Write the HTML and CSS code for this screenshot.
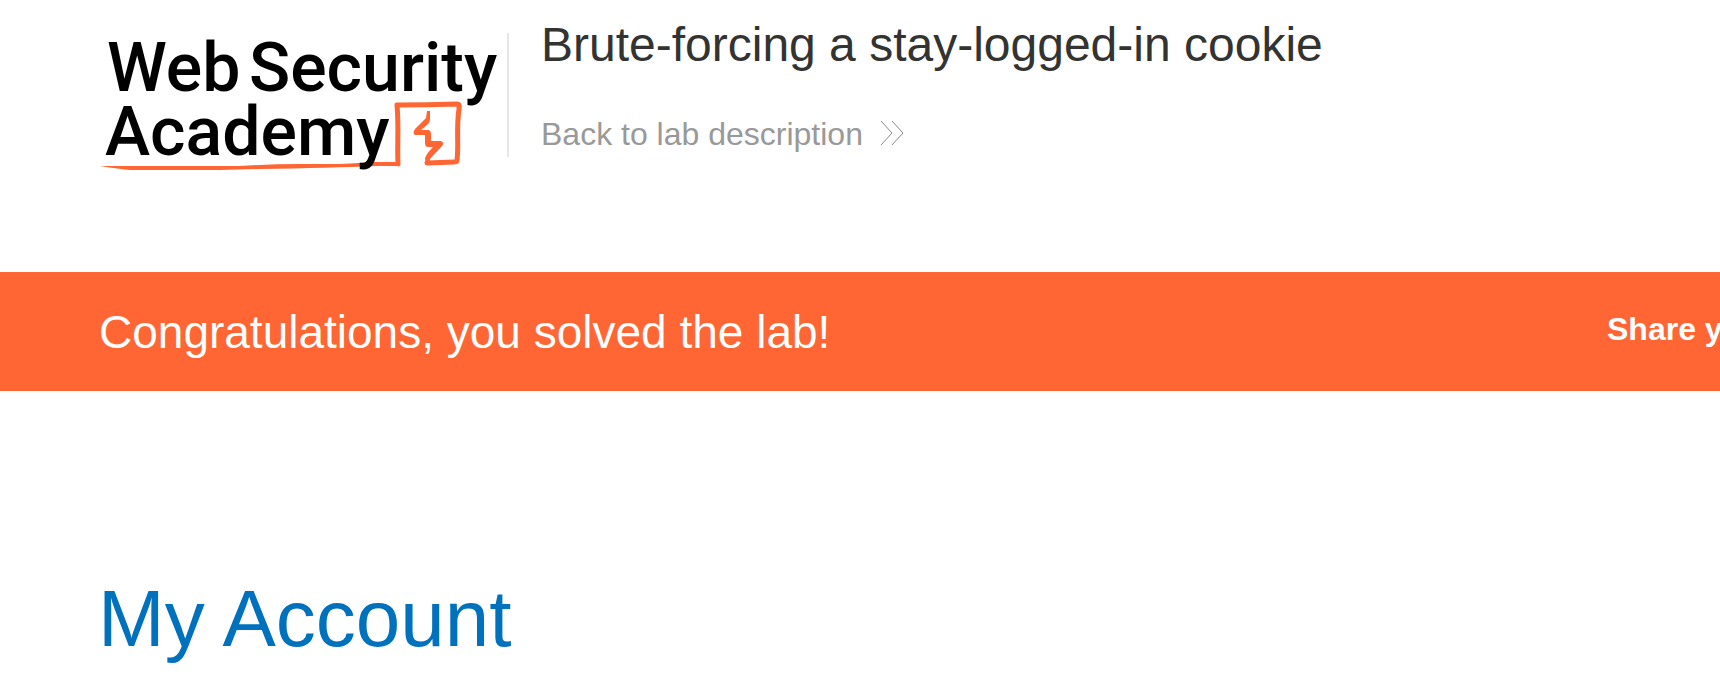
FILE: index.html
```html
<!DOCTYPE html>
<html lang="en">
<head>
<meta charset="utf-8">
<title>Brute-forcing a stay-logged-in cookie</title>
<link rel="stylesheet" href="styles.css">
</head>
<body>
<header class="lab-header">
  <svg class="logo" viewBox="0 0 400 150" role="img" aria-label="Web Security Academy">
    <path class="underline" d="M0 142 L12 142 Q30 142 90 142 L140 142 Q170 140 200 140 L240 140 Q260 139 276 138 L299 138 L299 142 L276 142 Q230 144 160 145 L120 146 L30 146 Q20 145 0 142 Z"/>
    <path class="frame-line" d="M298 140 C297 124 299 103 297 81 Q328 81 357 80 C360 80 359 82 359 85 C356 104 359 122 357 136 Q357 138 354 138 L327 139"/>
    <path class="spark" d="M327 87 L330 87 L330 95 Q330 98 328 100 L321 106 L329 106 Q331 107 331 110 L331 117 L341 117 Q345 119 342 122 L330 135 L330 141 L326 141 L325 134 Q327 129 333 123 L328 123 Q325 123 325 119 L325 111 L315 111 Q312 109 315 105 L326 94 Z"/>
    <g class="logo-text">
      <text x="7" y="67">Web</text>
      <text x="149" y="67">Security</text>
      <text x="5" y="131">Academy</text>
    </g>
  </svg>
  <div class="lab-title">
    <h2>Brute-forcing a stay-logged-in cookie</h2>
    <a class="back-link" href="#">Back to lab description
      <svg class="chevrons" viewBox="0 0 24 26" aria-hidden="true"><path d="M1 0 L12 12 L1 24 M12 0 L23 12 L12 24"/></svg>
    </a>
  </div>
</header>
<section class="solved-banner">
  <h4>Congratulations, you solved the lab!</h4>
  <span class="share">Share y</span>
</section>
<main class="content">
  <h1>My Account</h1>
</main>
</body>
</html>
```
FILE: styles.css
```css
* { box-sizing: border-box; }
body {
  margin: 0;
  background: #fff;
  color: #333332;
  font-family: "Liberation Sans", Arial, sans-serif;
  overflow-x: hidden;
}
h1, h2, h4 { margin: 0; font-weight: 400; }
.lab-header {
  display: flex;
  align-items: flex-start;
  padding: 18px 100px 98px;
}
.logo {
  flex: none;
  width: 400px;
  height: 150px;
  margin-top: 6px;
  overflow: visible;
}
.underline, .spark { fill: #f63; }
.frame-line {
  fill: none;
  stroke: #f63;
  stroke-width: 5;
  stroke-linejoin: round;
  stroke-linecap: round;
}
.logo-text {
  font-family: Roboto, sans-serif;
  font-size: 68px;
  font-weight: 500;
  fill: #000;
}
.lab-title {
  display: flex;
  flex-direction: column;
  gap: 41px;
  margin-top: 15px;
  margin-left: 7px;
  padding-left: 32px;
  border-left: 2px solid #e6e6e6;
  height: 124px;
}
.lab-title h2 { margin-top: -16px; font-size: 48px; line-height: 56px; white-space: nowrap; }
.back-link {
  display: flex;
  align-items: center;
  gap: 17px;
  color: #999;
  font-size: 32px;
  line-height: 40px;
  text-decoration: none;
}
.chevrons { width: 24px; height: 26px; fill: none; stroke: #888; stroke-width: 1; }
.solved-banner {
  display: flex;
  justify-content: space-between;
  padding: 32px 0 31px 99px;
  background: #f63;
  color: #fff;
}
.solved-banner h4 { font-size: 46px; line-height: 56px; }
.share { width: 113px; font-size: 32px; font-weight: 700; line-height: 50px; white-space: nowrap; }
.content { padding: 180px 98px 24px; }
.content h1 { color: #0071bc; font-size: 80px; line-height: 96px; }
```
